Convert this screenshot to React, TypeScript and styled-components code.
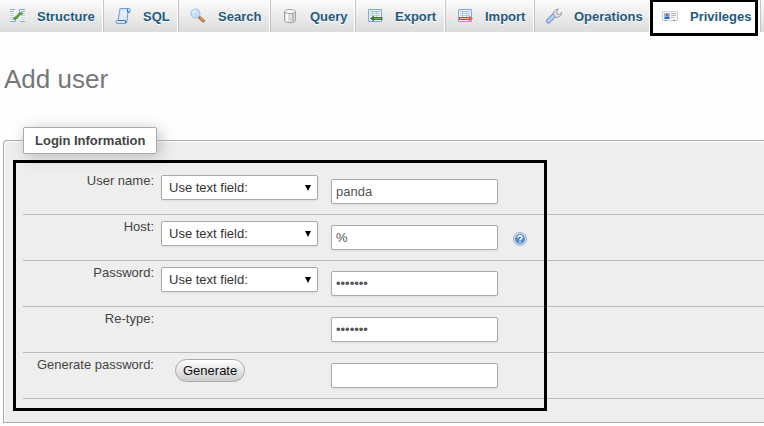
import React from "react";
import styled, { createGlobalStyle } from "styled-components";

const GlobalStyle = createGlobalStyle`
  * { box-sizing: border-box; }
  body {
    margin: 0;
    background: #fefefe;
    color: #444;
    font: 13px/15px "Liberation Sans", Arial, sans-serif;
    overflow: hidden;
  }
`;

const TabBar = styled.nav`
  display: flex;
  height: 32px;
  background: linear-gradient(#fbfbfb, #dcdcdc);
`;

const Tab = styled.a<{ $width: number; $current?: boolean }>`
  position: relative;
  display: flex;
  flex: none;
  align-items: center;
  gap: 12px;
  width: ${(p) => p.$width}px;
  padding-left: 12px;
  border-right: 1px solid #fff;
  box-shadow: 1px 0 0 #c4c4c4;
  background: ${(p) => (p.$current ? "#fff" : "transparent")};
  color: #235a81;
  font-weight: bold;
  text-decoration: none;
  text-shadow: 0 1px 0 #fff;
  white-space: nowrap;

  &:first-child {
    padding-left: 9px;
  }
`;

const Icon = styled.svg`
  display: block;
  flex: none;
  width: 16px;
  height: 16px;
`;

const TabHighlight = styled.span`
  position: absolute;
  inset: -1px 1px -4px 0;
  border: 3px solid #000;
`;

const Heading = styled.h2`
  margin: 31px 0 0 4px;
  color: #777;
  font-size: 26px;
  font-weight: normal;
  line-height: 32px;
`;

const LoginFieldset = styled.fieldset`
  min-width: 0;
  margin: 32px 0 0 3px;
  padding: 15px 0 23px 19px;
  border: 1px solid #aaa;
  border-right: 0;
  border-radius: 4px 0 0 0;
  background: #eee;
  box-shadow: 1px 1px 2px #fff inset;
`;

const Legend = styled.legend`
  padding: 5px 11px;
  border: 1px solid #aaa;
  border-radius: 2px;
  background: #fff;
  box-shadow: 3px 3px 15px #bbb;
  font-weight: bold;
`;

const Rows = styled.div`
  position: relative;
`;

const RowsHighlight = styled.div`
  position: absolute;
  top: -9px;
  left: -10px;
  bottom: -12px;
  width: 534px;
  border: 3px solid #000;
  pointer-events: none;
`;

const Row = styled.div`
  display: grid;
  grid-template-columns: 131px 157px 167px 16px;
  column-gap: 7px;
  align-items: start;
  height: 46px;
  padding-top: 4px;
  border-bottom: 1px solid #bbb;
`;

const Label = styled.label`
  text-align: right;
`;

const SelectBox = styled.div`
  display: grid;
  margin-top: 2px;
  align-items: center;
`;

const Select = styled.select`
  grid-area: 1 / 1;
  appearance: none;
  width: 100%;
  height: 25px;
  padding: 0 7px;
  border: 1px solid #aaa;
  border-radius: 2px;
  background: #fff;
  box-shadow: 0 1px 2px #ddd;
  color: #333;
  font: inherit;
`;

const Arrow = styled.svg`
  grid-area: 1 / 1;
  justify-self: end;
  width: 6px;
  height: 6px;
  margin-right: 7px;
  pointer-events: none;
`;

const Field = styled.input`
  width: 167px;
  height: 25px;
  margin: 6px 0 0 6px;
  padding: 0 4px;
  border: 1px solid #aaa;
  border-radius: 2px;
  background: #fff;
  box-shadow: 0 1px 2px #ddd;
  color: #555;
  font: inherit;
`;

const GenerateButton = styled.button`
  justify-self: start;
  height: 23px;
  margin: 2px 0 0 14px;
  padding: 0 7px;
  border: 1px solid #aaa;
  border-radius: 12px;
  background: linear-gradient(#fff, #ccc);
  color: #111;
  font: inherit;
`;

const HelpLink = styled.a`
  margin: 12px 0 0 13px;
`;

function Sheet({ color }: { color: string }) {
  return (
    <>
      <path d="M1.5 1.5h13v12h-13z" fill="#eef5fe" stroke="#7da7e4" />
      <path d="M3 5.500h10M3 7.500h10M3 10.500h10M5.500 4v7M9.500 4v7" stroke="#b9cbe2" />
      <path d="M3 3.500h10" stroke={color} />
    </>
  );
}

const icons: Record<string, React.ReactNode> = {
  Structure: (
    <>
      <path d="M1 1.500h5v12H1zM11 1.500h5v12h-5z" fill="#f7faff" />
      <path d="M1 1.500h5M1 13.500h5.500V9M16 1.500h-5.500V6M11 13.500h5" fill="none" stroke="#7ea9e6" />
      <path d="M1 3.500h4M12 3.500h4" stroke="#8fc187" />
      <path d="M1 5.500h4M1 7.500h4M1 9.500h4M1 11.500h4M12 5.500h4M12 7.500h4M12 9.500h4M12 11.500h4" stroke="#c3cdd9" />
      <path d="M5.500 10.500l2-1 3-3.500 2-.5" fill="none" stroke="#3f8c35" strokeWidth="2.600" strokeLinecap="round" strokeLinejoin="round" />
      <path d="M5.500 10.200l2-1 3-3.500 2-.5" fill="none" stroke="#7cbd6c" strokeWidth="0.800" />
    </>
  ),
  SQL: (
    <>
      <path d="M5 .5h9.500c1 0 1 3.500 0 3.500H13l-1 9c0 2-1 2.500-2 2.500H2c-1.500 0-1.500-3 0-3h1z" fill="#cfe5fd" stroke="#6b9edb" />
      <path d="M6 2.500h6l-1 9H5z" fill="#e2f0ff" />
      <path d="M3 12.500h7.500v2.500M12.500 1v3H15" fill="none" stroke="#3e74b4" />
    </>
  ),
  Search: (
    <>
      <path d="M9.500 9.500l4 3.500" stroke="#b8733b" strokeWidth="3" strokeLinecap="round" />
      <path d="M10 9.500l3.500 3" stroke="#edbb80" />
      <circle cx="5.500" cy="5.500" r="4.500" fill="#c4e0fb" stroke="#9dbfe9" />
      <path d="M3 5.500c0-2 1.500-3 3-3" fill="none" stroke="#eaf5ff" strokeWidth="1.300" />
    </>
  ),
  Query: (
    <>
      <path d="M2.500 3.500v9c0 3 11 3 11 0v-9" fill="#dcdcdc" stroke="#a2a2a2" />
      <path d="M5 5v8.500" stroke="#fff" strokeWidth="2" />
      <path d="M11 5v8.500" stroke="#bbb" strokeWidth="2" />
      <ellipse cx="8" cy="3.500" rx="5.500" ry="2" fill="#f6f6f6" stroke="#a8a8a8" />
    </>
  ),
  Export: (
    <>
      <Sheet color="#9cc795" />
      <path d="M15.500 10.500H6" stroke="#397a30" strokeWidth="3" />
      <path d="M14.500 10.500H6" stroke="#75ad65" />
      <path d="M7 7.500l-4 3 4 3z" fill="#397a30" />
    </>
  ),
  Import: (
    <>
      <Sheet color="#a4bfe8" />
      <path d="M2 10.500h10" stroke="#e2393d" strokeWidth="3" />
      <path d="M3 10.500h9" stroke="#ffb3ac" />
      <path d="M12 7.500l4 3-4 3z" fill="#ed565a" />
    </>
  ),
  Operations: (
    <>
      <path d="M2.500 13l6-6" stroke="#7292ce" strokeWidth="5" strokeLinecap="round" />
      <path d="M2.500 13l6-6" stroke="#b4cdfa" strokeWidth="3" strokeLinecap="round" />
      <path d="M8 8L7.500 4l3-3h2l-2 3 1 2 2 .5L16 4v2l-3 3-3 .5z" fill="#dedede" stroke="#999" strokeWidth="0.900" />
    </>
  ),
  Privileges: (
    <>
      <path d="M.5 3.500h15v9H.5z" fill="#f6f6f6" stroke="#d0d0d0" />
      <path d="M2 5h6v6H2z" fill="#91bff2" />
      <circle cx="5" cy="7" r="1.500" fill="#a56d43" />
      <path d="M2.500 11c0-3 5-3 5 0z" fill="#2f66b1" />
      <path d="M9 5.500h5M9 7.500h5M9 9.500h3" stroke="#b5b5b5" />
      <path d="M3 12.500h2M11 12.500h2" stroke="#888" />
    </>
  ),
};

const tabs = [
  { name: "Structure", width: 103 },
  { name: "SQL", width: 75 },
  { name: "Search", width: 92 },
  { name: "Query", width: 85 },
  { name: "Export", width: 90 },
  { name: "Import", width: 89 },
  { name: "Operations", width: 116 },
  { name: "Privileges", width: 110, current: true },
];

const rows = [
  { id: "username", label: "User name:", select: true, value: "panda" },
  { id: "host", label: "Host:", select: true, value: "%", help: true },
  { id: "password", label: "Password:", select: true, value: "secret1", secret: true },
  { id: "retype", label: "Re-type:", value: "secret1", secret: true },
  { id: "generated", label: "Generate password:", value: "", generate: true },
];

export default function App() {
  return (
    <>
      <GlobalStyle />
      <TabBar>
        {tabs.map((t) => (
          <Tab key={t.name} href="#" $width={t.width} $current={t.current}>
            <Icon viewBox="0 0 16 16" aria-hidden="true">{icons[t.name]}</Icon>
            {t.name}
            {t.current && <TabHighlight />}
          </Tab>
        ))}
      </TabBar>
      <Heading>Add user</Heading>
      <LoginFieldset>
        <Legend>Login Information</Legend>
        <Rows>
          {rows.map((r) => (
            <Row key={r.id}>
              <Label htmlFor={r.id}>{r.label}</Label>
              {r.select ? (
                <SelectBox>
                  <Select aria-label={`${r.label} source`}>
                    <option>Use text field:</option>
                  </Select>
                  <Arrow viewBox="0 0 6 6" aria-hidden="true">
                    <path d="M0 0h6L3 6z" />
                  </Arrow>
                </SelectBox>
              ) : r.generate ? (
                <GenerateButton type="button">Generate</GenerateButton>
              ) : (
                <span />
              )}
              <Field id={r.id} type={r.secret ? "password" : "text"} defaultValue={r.value} />
              {r.help && (
                <HelpLink href="#" aria-label="Documentation">
                  <Icon viewBox="0 0 16 16" aria-hidden="true">
                    <circle cx="8" cy="8" r="6.500" fill="#d6e5f6" stroke="#8fb0da" />
                    <circle cx="8" cy="8" r="5" fill="#5b8ac6" />
                    <path d="M6 6.500c0-2.500 4-2.300 4 0 0 1.300-2 1.300-2 2.700M8 10.300v1.400" fill="none" stroke="#fff" strokeWidth="1.500" />
                  </Icon>
                </HelpLink>
              )}
            </Row>
          ))}
          <RowsHighlight />
        </Rows>
      </LoginFieldset>
    </>
  );
}
